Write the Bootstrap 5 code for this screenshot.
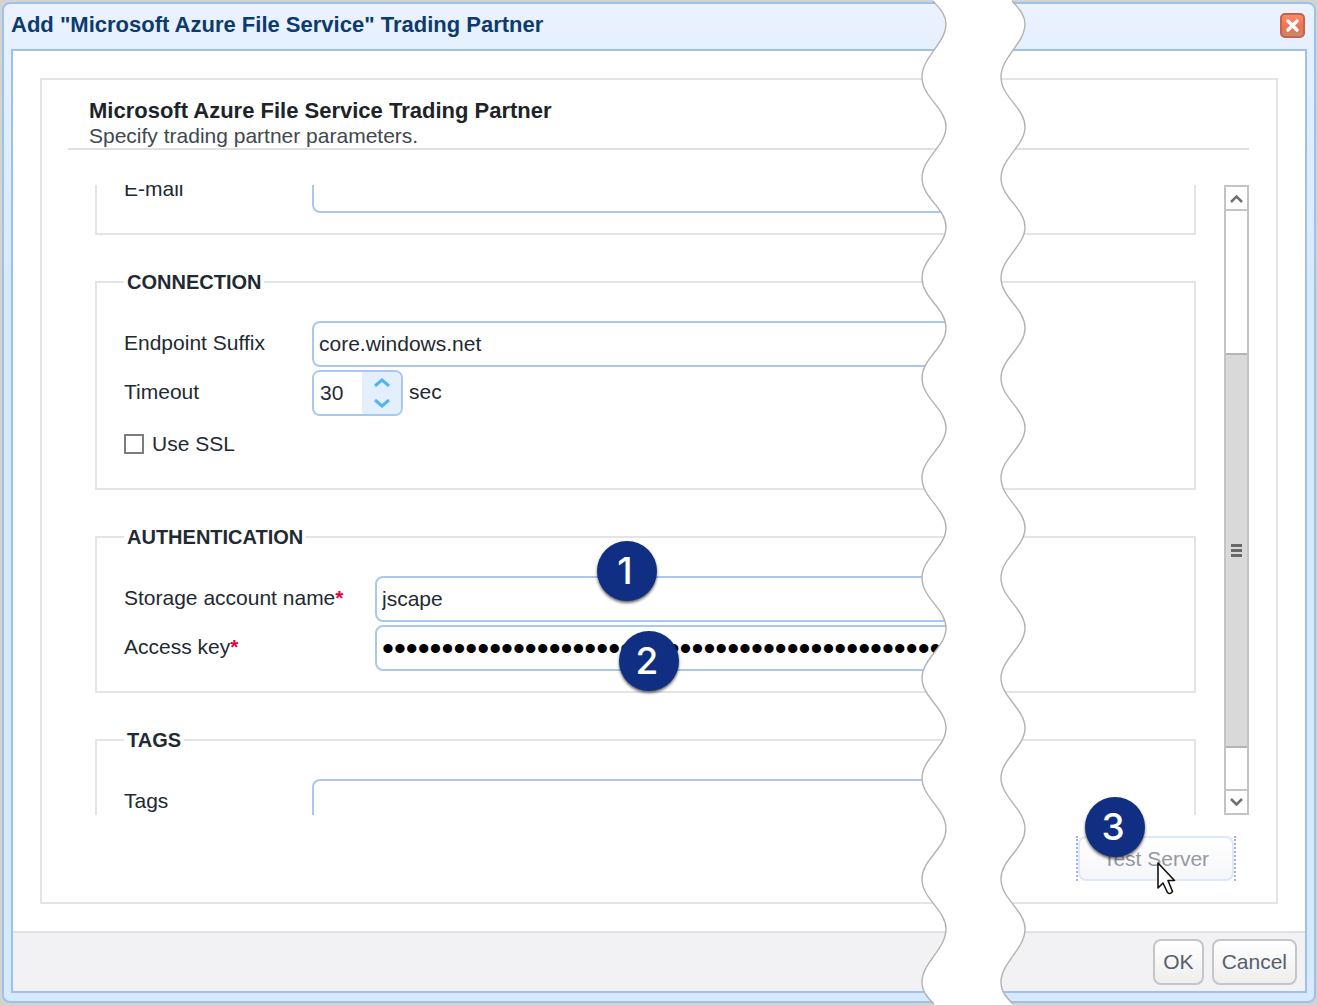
<!DOCTYPE html>
<html lang="en">
<head>
<meta charset="utf-8">
<meta name="viewport" content="width=device-width, initial-scale=1">
<title>Add Trading Partner</title>
<link href="https://cdn.jsdelivr.net/npm/bootstrap@5.3.0/dist/css/bootstrap.min.css" rel="stylesheet">
<style>
body{font-family:"Liberation Sans",Arial,sans-serif;font-size:21px;line-height:26px;color:#1f2a33;background:#d3d3d1;padding:2px 2px 2px 2px}
.dialog-frame{border:2px solid #9cc3ee;border-radius:8px;background:linear-gradient(#ecf2fe,#e5f0fe 48px,#d8e8fd 300px);padding:0 7px 8px}
.dialog-title{height:45px;font-size:22px;line-height:26px;color:#0c3b6e;margin:0;padding-bottom:3px}
.close-box{width:25px;height:25px;padding:0;border:2px solid #c8604a;border-radius:5px;background:linear-gradient(#f98a68,#ea7353 60%,#c98a6c);margin-right:2px}
.dialog-inner{border:2px solid #9fc0ea;background:#fff}
.group-box{border:2px solid #e4e4e4;margin:27px 27px 27px 27px;padding:18px 27px 21px 26px}
.intro{border-bottom:2px solid #e0e0e0;padding-left:21px;line-height:25px}
.intro h1{font-size:22px;line-height:25px;color:#1d2429}
.intro p{color:#41484e}
.scroll-row{margin-top:35px;height:630px}
.section-list{padding-left:27px;overflow:hidden;min-width:0}
.section-box{border:2px solid #e4e4e4;padding:26px 208px 20px 27px;margin-bottom:34px}
.section-box.scrolled{margin-top:-46px}
.section-box legend{float:none;width:auto;font-size:20px;line-height:26px;font-weight:bold;padding:0 3px;margin:0}
.line{height:46px;margin-bottom:3px}
.line:last-child{margin-bottom:0}
.line.check-line{height:49px}
.line>label,.unit{padding-bottom:3px}
.unit{padding-left:6px}
.cap{width:188px;flex:none}
.cap.wide{width:251px}
.star{color:#e8003c;font-weight:bold}
.text-field,.spin-field{border:2px solid #a9c8ef;border-radius:8px;height:46px;background:#fff;color:#1f2a33;min-width:0}
.text-field{padding:0 5px;outline:0}
.secret{font-size:34px;color:#000}
.spin-field{width:91px;overflow:hidden}
.spin-field input{border:0;outline:0;width:48px;padding:0 0 0 6px;appearance:textfield;-moz-appearance:textfield;color:inherit}
.spin-field input::-webkit-inner-spin-button{appearance:none;margin:0}
.spin-pad{background:#e4effd}
.spin-pad button{border:0;background:none;padding:0;height:21px;line-height:0}
.tick{appearance:none;width:20px;height:20px;border:2px solid #7c7c7c;background:#fff;margin:0 8px 0 0}
.bar{width:25px;margin-left:28px;border:2px solid #c4c4c4;background:#fff}
.bar button{height:24px;border:0;background:#fff;padding:0;line-height:0}
.bar .up{border-bottom:2px solid #c4c4c4}
.bar .down{border-top:2px solid #c4c4c4}
.thumb{height:395px;background:#d9d9d9;border:solid #b4b4b4;border-width:2px 0}
.track-end{height:41px}
.test-wrap{border:dotted #a9adf0;border-width:0 2px;margin:21px 13px 0 0}
.soft-btn{height:46px;border:2px solid #c6c6c8;border-radius:8px;background:linear-gradient(#fff,#eeeeef);color:#565f6b;padding:0 8px}
.test-wrap .soft-btn{height:45px;width:156px;border-color:#dceafc;background:linear-gradient(#fff,#f5f6f8);color:#96999d;padding:0}
.dialog-foot{border-top:2px solid #e0e0e0;background:#f2f2f4;padding:6px 8px 6px 0;gap:8px}
.tear{position:absolute;top:0;right:288px;width:112px;height:1006px}
.step-dot{position:absolute;width:60px;height:60px;border-radius:50%;background:#112f82;color:#fff;font-family:Inter,"Liberation Sans",sans-serif;font-weight:500;font-size:37px;padding-right:4px;box-shadow:0 2px 3px rgba(0,0,0,.6)}
.dot-a{left:597px;top:541px}
.dot-b{left:619px;top:631px}
.dot-c{right:173px;top:797px}
.pointer{position:absolute;right:142px;top:861px}
</style>
<script src="https://cdn.jsdelivr.net/npm/bootstrap@5.3.0/dist/js/bootstrap.bundle.min.js"></script>
</head>
<body class="position-relative overflow-x-hidden">
<main class="dialog-frame">
  <header class="dialog-title d-flex align-items-center justify-content-between">
    <strong>Add "Microsoft Azure File Service" Trading Partner</strong>
    <button type="button" class="close-box d-flex align-items-center justify-content-center" aria-label="Close"><svg width="15" height="15" viewBox="0 0 15 15"><path d="M3 3l9 9M12 3l-9 9" stroke="#fff" stroke-width="3.4" stroke-linecap="round"/></svg></button>
  </header>
  <form class="dialog-inner">
    <div class="group-box">
      <div class="intro">
        <h1 class="fw-bold m-0">Microsoft Azure File Service Trading Partner</h1>
        <p class="m-0">Specify trading partner parameters.</p>
      </div>
      <div class="scroll-row d-flex">
        <div class="section-list flex-grow-1">
          <fieldset class="section-box scrolled">
            <div class="line d-flex align-items-center"><label class="cap" for="mail">E-mail</label><input class="text-field flex-grow-1" id="mail" type="email"></div>
          </fieldset>
          <fieldset class="section-box">
            <legend>CONNECTION</legend>
            <div class="line d-flex align-items-center"><label class="cap" for="suffix">Endpoint Suffix</label><input class="text-field flex-grow-1" id="suffix" type="text" value="core.windows.net"></div>
            <div class="line d-flex align-items-center"><label class="cap" for="timeout">Timeout</label>
              <div class="spin-field d-flex"><input id="timeout" type="number" value="30">
                <div class="spin-pad flex-grow-1 d-flex flex-column"><button type="button" aria-label="Increase"><svg width="16" height="9" viewBox="0 0 16 9"><path d="M1 8l7-6 7 6" fill="none" stroke="#4fb6ee" stroke-width="3"/></svg></button><button type="button" aria-label="Decrease"><svg width="16" height="9" viewBox="0 0 16 9"><path d="M1 1l7 6 7-6" fill="none" stroke="#4fb6ee" stroke-width="3"/></svg></button></div>
              </div><span class="unit">sec</span></div>
            <div class="line check-line d-flex align-items-center"><input class="tick" id="ssl" type="checkbox"><label class="pb-0" for="ssl">Use SSL</label></div>
          </fieldset>
          <fieldset class="section-box">
            <legend>AUTHENTICATION</legend>
            <div class="line d-flex align-items-center"><label class="cap wide" for="account">Storage account name<span class="star">*</span></label><input class="text-field flex-grow-1" id="account" type="text" value="jscape"></div>
            <div class="line d-flex align-items-center"><label class="cap wide" for="key">Access key<span class="star">*</span></label><input class="text-field secret flex-grow-1" id="key" type="password" value="000000000000000000000000000000000000000000000000000000000000"></div>
          </fieldset>
          <fieldset class="section-box">
            <legend>TAGS</legend>
            <div class="line d-flex align-items-center"><label class="cap" for="tags">Tags</label><input class="text-field flex-grow-1" id="tags" type="text"></div>
          </fieldset>
        </div>
        <div class="bar d-flex flex-column flex-shrink-0">
          <button type="button" class="up" aria-label="Scroll up"><svg width="13" height="9" viewBox="0 0 13 9"><path d="M1 8l5.500-5.500L12 8" fill="none" stroke="#707070" stroke-width="2.500"/></svg></button>
          <div class="flex-grow-1"></div>
          <div class="thumb d-flex align-items-center justify-content-center"><svg width="11" height="13" viewBox="0 0 11 13"><path d="M0 1.500h11M0 6.500h11M0 11.500h11" stroke="#686868" stroke-width="3"/></svg></div>
          <div class="track-end"></div>
          <button type="button" class="down" aria-label="Scroll down"><svg width="13" height="9" viewBox="0 0 13 9"><path d="M1 1l5.500 5.500L12 1" fill="none" stroke="#707070" stroke-width="2.500"/></svg></button>
        </div>
      </div>
      <div class="d-flex justify-content-end"><div class="test-wrap"><button type="button" class="soft-btn d-block">Test Server</button></div></div>
    </div>
    <footer class="dialog-foot d-flex justify-content-end">
      <button type="button" class="soft-btn">OK</button>
      <button type="button" class="soft-btn">Cancel</button>
    </footer>
  </form>
</main>
<svg class="tear" viewBox="918 0 112 1006" aria-hidden="true">
  <defs><path id="edge" d="M933 1C939 8 946 14 946 24C946 43 922 57 922 77S946 108 946 127 922 158 922 178 946 208 946 227 922 258 922 278 946 308 946 328 922 358 922 378 946 409 946 428 922 458 922 478 946 509 946 528 922 558 922 578 946 609 946 628 922 659 922 678 946 709 946 728 922 759 922 778 946 809 946 829 922 859 922 879 946 910 946 929C946 949 922 963 922 982C922 992 928 998 934 1004"/></defs>
  <path fill="#fff" d="M933 0V1C939 8 946 14 946 24C946 43 922 57 922 77S946 108 946 127 922 158 922 178 946 208 946 227 922 258 922 278 946 308 946 328 922 358 922 378 946 409 946 428 922 458 922 478 946 509 946 528 922 558 922 578 946 609 946 628 922 659 922 678 946 709 946 728 922 759 922 778 946 809 946 829 922 859 922 879 946 910 946 929C946 949 922 963 922 982C922 992 928 998 934 1004V1006H1013V1004C1007 998 1001 992 1001 982C1001 963 1025 949 1025 929C1025 910 1001 899 1001 879S1025 848 1025 829 1001 798 1001 778 1025 748 1025 728 1001 698 1001 678 1025 648 1025 628 1001 597 1001 578 1025 547 1025 528 1001 497 1001 478 1025 447 1025 428 1001 397 1001 378 1025 347 1025 328 1001 297 1001 278 1025 247 1025 227 1001 197 1001 178 1025 147 1025 127 1001 97 1001 77C1001 57 1025 43 1025 24C1025 14 1018 8 1012 1V0Z"/>
  <g fill="none" stroke="#b2b2b2" stroke-width="1.400"><use href="#edge"/><use href="#edge" x="79"/></g>
</svg>
<span class="step-dot dot-a d-flex align-items-center justify-content-center">1</span>
<span class="step-dot dot-b d-flex align-items-center justify-content-center">2</span>
<span class="step-dot dot-c d-flex align-items-center justify-content-center">3</span>
<svg class="pointer" width="20" height="36" viewBox="0 0 20 36" aria-hidden="true"><path d="M2 2V27L7 22L11.500 31.500Q14 34 16.500 30.500L12 19.500H18.500Z" fill="#fff" stroke="#111" stroke-width="1.600" stroke-linejoin="round"/></svg>
</body>
</html>
